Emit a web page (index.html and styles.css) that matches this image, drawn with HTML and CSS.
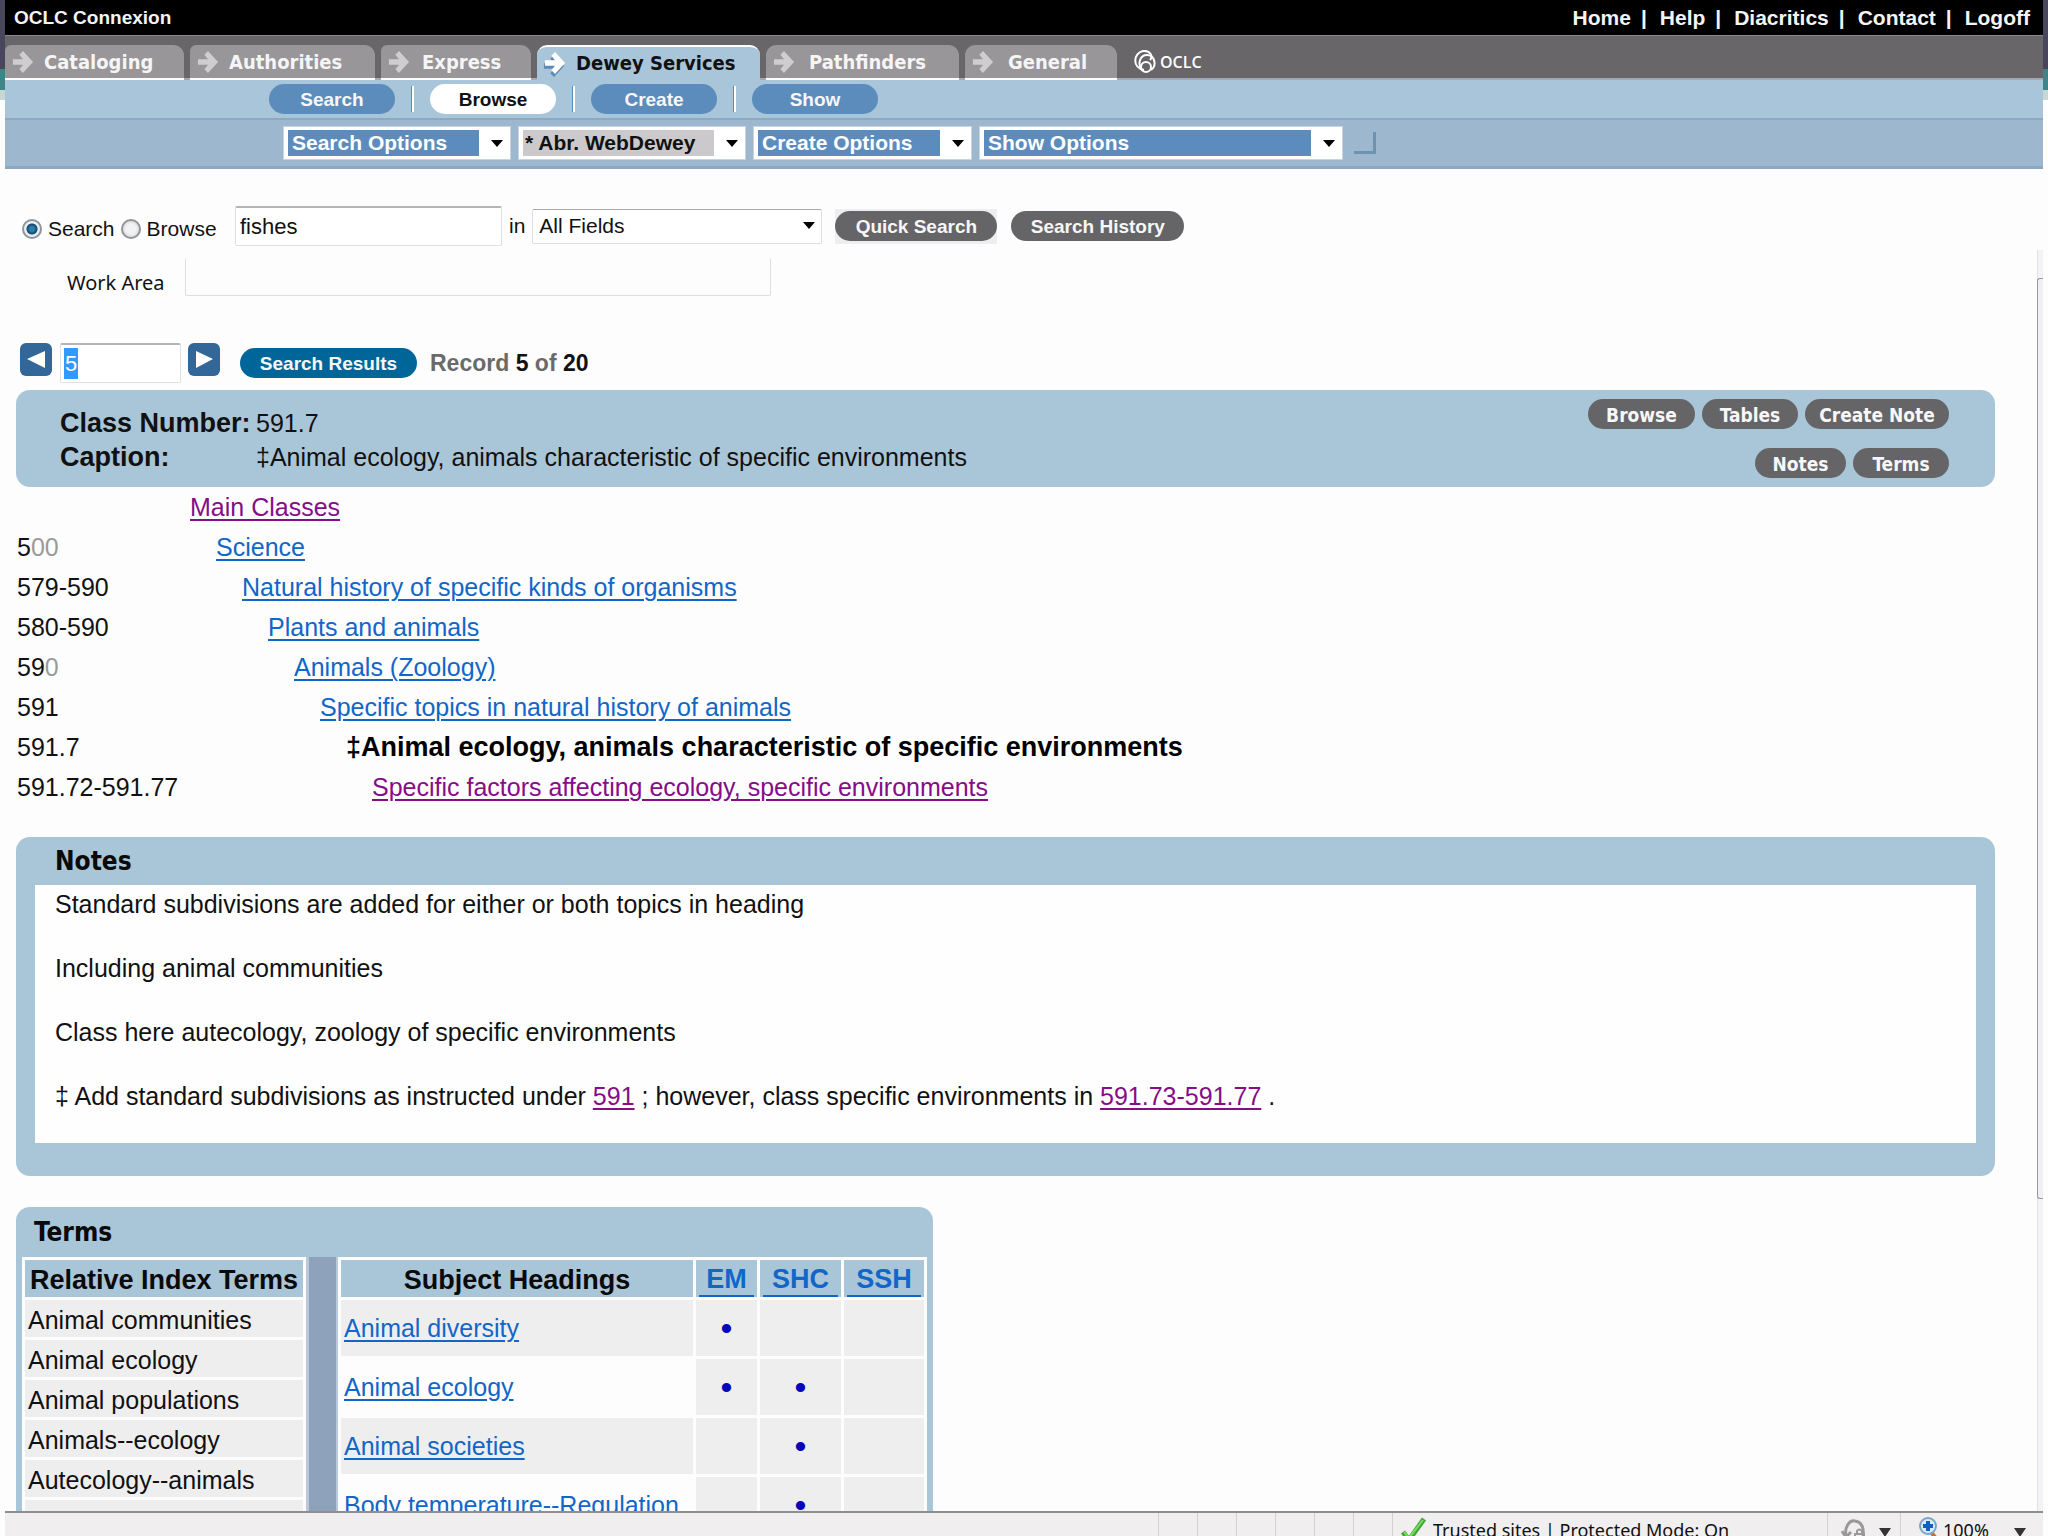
FILE: index.html
```html
<!DOCTYPE html>
<html lang="en">
<head>
<meta charset="utf-8">
<title>OCLC Connexion</title>
<link rel="stylesheet" href="styles.css">
</head>
<body>
<svg class="defs" aria-hidden="true">
  <symbol id="arrow" viewBox="0 0 22 24"><path d="M0 9h11L7 4l4-4 11 12-11 12-4-4 4-5H0z"/></symbol>
</svg>
<header>
  <div class="topbar">
    <span class="product">OCLC Connexion</span>
    <nav class="toplinks" aria-label="Utility">
      <a href="#">Home</a><i>|</i><a href="#">Help</a><i>|</i><a href="#">Diacritics</a><i>|</i><a href="#">Contact</a><i>|</i><a href="#">Logoff</a>
    </nav>
  </div>
  <nav class="tabs" aria-label="Services">
    <a href="#" class="tab tab-cat"><svg><use href="#arrow"/></svg>Cataloging</a>
    <a href="#" class="tab tab-auth"><svg><use href="#arrow"/></svg>Authorities</a>
    <a href="#" class="tab tab-exp"><svg><use href="#arrow"/></svg>Express</a>
    <a href="#" class="tab tab-dewey active"><svg><use href="#arrow"/></svg>Dewey Services</a>
    <a href="#" class="tab tab-path"><svg><use href="#arrow"/></svg>Pathfinders</a>
    <a href="#" class="tab tab-gen"><svg><use href="#arrow"/></svg>General</a>
    <span class="brand">
      <svg viewBox="0 0 22 24" fill="none" stroke="#fff"><path d="M10 20C-2 18-1 3 9 1c8-1 10 6 7 9" stroke-width="2"/><path d="M8 20C3 14 6 5 13 5c8 0 10 11 4 15" stroke-width="2"/><circle cx="12" cy="17" r="5" stroke-width="2"/></svg>OCLC
    </span>
  </nav>
  <nav class="subnav" aria-label="Dewey Services">
    <button type="button" class="mode">Search</button><span class="sep"></span>
    <button type="button" class="mode current">Browse</button><span class="sep"></span>
    <button type="button" class="mode">Create</button><span class="sep"></span>
    <button type="button" class="mode">Show</button>
  </nav>
  <div class="options">
    <div class="drop drop-s"><select aria-label="Search options"><option>Search Options</option></select></div>
    <div class="drop drop-s drop-gray"><select aria-label="Database"><option>* Abr. WebDewey</option></select></div>
    <div class="drop drop-c"><select aria-label="Create options"><option>Create Options</option></select></div>
    <div class="drop drop-l"><select aria-label="Show options"><option>Show Options</option></select></div>
    <span class="corner"></span>
  </div>
</header>

<div class="frame">
<main>
  <form class="search">
    <div class="radios">
      <input type="radio" name="m" id="m-search" checked><label for="m-search">Search</label>
      <input type="radio" name="m" id="m-browse"><label for="m-browse">Browse</label>
    </div>
    <input class="field term" type="text" value="fishes" aria-label="Search term">
    <label for="index" class="in">in</label>
    <div class="index"><select id="index"><option>All Fields</option></select></div>
    <span class="halo"><button type="button" class="pill quick">Quick Search</button></span>
    <button type="button" class="pill history">Search History</button>
  </form>
  <div class="work">
    <label for="work">Work Area</label><input id="work" type="text">
  </div>
  <div class="record">
    <button type="button" class="step" aria-label="Previous record"><svg viewBox="0 0 32 33"><path d="M25 8v17L7 16z" fill="#fff"/></svg></button>
    <input class="field number" type="text" value="5" aria-label="Record number">
    <button type="button" class="step" aria-label="Next record"><svg viewBox="0 0 32 33"><path d="M8 8v17l17-9z" fill="#fff"/></svg></button>
    <button type="button" class="pill results">Search Results</button>
    <span class="position">Record <b>5</b> of <b>20</b></span>
  </div>

  <section class="panel class-panel">
    <dl>
      <dt>Class Number:</dt><dd>591.7</dd>
      <dt>Caption:</dt><dd>‡Animal ecology, animals characteristic of specific environments</dd>
    </dl>
    <div class="actions">
      <div><button type="button" class="pill act act-b">Browse</button><button type="button" class="pill act act-t">Tables</button><button type="button" class="pill act act-c">Create Note</button></div>
      <div><button type="button" class="pill act act-n">Notes</button><button type="button" class="pill act act-t">Terms</button></div>
    </div>
  </section>

  <ul class="tree">
    <li><span></span><a class="seen" href="#" style="--depth:0">Main Classes</a></li>
    <li><span>5<s>00</s></span><a href="#" style="--depth:1">Science</a></li>
    <li><span>579-590</span><a href="#" style="--depth:2">Natural history of specific kinds of organisms</a></li>
    <li><span>580-590</span><a href="#" style="--depth:3">Plants and animals</a></li>
    <li><span>59<s>0</s></span><a href="#" style="--depth:4">Animals (Zoology)</a></li>
    <li><span>591</span><a href="#" style="--depth:5">Specific topics in natural history of animals</a></li>
    <li><span>591.7</span><strong style="--depth:6">‡Animal ecology, animals characteristic of specific environments</strong></li>
    <li><span>591.72-591.77</span><a class="seen" href="#" style="--depth:7">Specific factors affecting ecology, specific environments</a></li>
  </ul>

  <section class="panel notes">
    <h2>Notes</h2>
    <div class="notes-body">
      <p>Standard subdivisions are added for either or both topics in heading</p>
      <p>Including animal communities</p>
      <p>Class here autecology, zoology of specific environments</p>
      <p>‡ Add standard subdivisions as instructed under <a class="seen" href="#">591</a> ; however, class specific environments in <a class="seen" href="#">591.73-591.77</a> .</p>
    </div>
  </section>

  <section class="panel terms">
    <h2>Terms</h2>
    <div class="tables">
      <table class="relative">
        <thead><tr><th>Relative Index Terms</th></tr></thead>
        <tbody>
          <tr><td>Animal communities</td></tr>
          <tr><td>Animal ecology</td></tr>
          <tr><td>Animal populations</td></tr>
          <tr><td>Animals--ecology</td></tr>
          <tr><td>Autecology--animals</td></tr>
          <tr><td></td></tr>
        </tbody>
      </table>
      <div class="divider"></div>
      <table class="subjects">
        <thead><tr><th>Subject Headings</th><th class="em"><a href="#">EM</a></th><th class="shc"><a href="#">SHC</a></th><th class="ssh"><a href="#">SSH</a></th></tr></thead>
        <tbody>
          <tr><td><a href="#">Animal diversity</a></td><td>•</td><td></td><td></td></tr>
          <tr><td><a href="#">Animal ecology</a></td><td>•</td><td>•</td><td></td></tr>
          <tr><td><a href="#">Animal societies</a></td><td></td><td>•</td><td></td></tr>
          <tr><td><a href="#">Body temperature--Regulation</a></td><td></td><td>•</td><td></td></tr>
        </tbody>
      </table>
    </div>
  </section>
</main>
<div class="scroll"><div class="thumb"></div></div>
</div>

<footer>
  <span class="slot"></span><span class="slot"></span><span class="slot"></span><span class="slot"></span><span class="slot"></span><span class="slot"></span>
  <div class="zone">
    <svg class="check" viewBox="0 0 26 26"><path d="M2 15l6 8L23 2" fill="none" stroke="#3fa637" stroke-width="5"/><path d="M3 15l5 6L22 3" fill="none" stroke="#7bdc62" stroke-width="2"/></svg>
    <span>Trusted sites | Protected Mode: On</span>
  </div>
  <div class="lock">
    <svg viewBox="0 0 26 26" fill="none" stroke="#999" stroke-width="3"><path d="M5 20C3 9 9 3 14 4c8 1 9 9 8 16"/><path d="M1 14l4 6 5-5"/><rect x="14" y="17" width="9" height="8" stroke-width="2"/><path d="M16 17v-3q2-3 5 0v3" stroke-width="2"/></svg>
    <i class="caret"></i>
  </div>
  <div class="zoom">
    <svg viewBox="0 0 22 26"><path d="M12 15l7 9" stroke="#b8763a" stroke-width="4"/><circle cx="9" cy="9" r="8" fill="#d7ebfb" stroke="#7fa3c4" stroke-width="2"/><path d="M9 4v10M4 9h10" stroke="#0b62c4" stroke-width="4"/></svg>
    <span>100%</span>
    <i class="caret"></i>
  </div>
</footer>
</body>
</html>
```
FILE: styles.css
```css
* { box-sizing: border-box; }

body {
  margin: 0;
  padding: 0 5px;
  height: 100vh;
  overflow: hidden;
  display: flex;
  flex-direction: column;
  background: linear-gradient(#47465a 0 69px, #3f8487 69px 90px, #c9d6d6 90px 100px, #fdfdfd 100px);
  font: 25px/32px "Liberation Sans", Arial, sans-serif;
  color: #111;
}

.defs { position: absolute; width: 0; height: 0; }
button, input, select { font: inherit; margin: 0; }
button { border: 0; cursor: pointer; }
a { color: #1166c8; text-decoration-thickness: 2px; text-underline-offset: 3px; }
a.seen { color: #860c88; }
i { font-style: normal; }

/* Header */
header { flex: none; }

.topbar {
  height: 35px;
  padding: 0 13px 0 9px;
  display: flex;
  justify-content: space-between;
  align-items: center;
  background: #000;
  color: #f4f4f4;
  font-weight: bold;
}
.product { font-size: 19px; }
.toplinks { display: flex; font-size: 21px; }
.toplinks a { color: inherit; text-decoration: none; }
.toplinks i { padding: 0 13px 0 10px; }

.tabs {
  height: 45px;
  display: flex;
  align-items: flex-end;
  gap: 6px;
  background: #686668;
  border-top: 1px solid #8b8b8b;
  border-bottom: 2px solid #a3a9b4;
  font: bold 20px/24px "DejaVu Sans Condensed", "DejaVu Sans", sans-serif;
}
.tab {
  height: 33px;
  display: flex;
  align-items: center;
  gap: 10px;
  padding-left: 7px;
  background: #989698;
  color: #f5f5f5;
  border-radius: 10px 10px 0 0;
  text-decoration: none;
  box-shadow: 0 2px #fff;
}
.tab svg { width: 22px; height: 22px; fill: #cfcdcf; flex: none; }
.tab-cat { width: 179px; }
.tab-auth { width: 185px; }
.tab-exp { width: 150px; }
.tab-dewey { width: 223px; }
.tab-path { width: 193px; gap: 14px; }
.tab-gen { width: 152px; gap: 14px; }
.tab-cat, .tab-auth, .tab-exp { border-top-left-radius: 6px; }
.tab-exp { gap: 12px; }
.tab.active { background: #a9c5d9; color: #111; border-top: 2px solid #fff; box-shadow: 0 2px #a9c5d9; }
.tab.active svg { fill: #fff; filter: drop-shadow(-1px 3px 0 #5b88b5); }
.brand {
  height: 32px;
  margin-left: 11px;
  display: flex;
  align-items: center;
  gap: 4px;
  color: #fff;
  font: 600 16px/24px "Open Sans", sans-serif;
}
.brand svg { width: 22px; height: 24px; }

.subnav {
  height: 40px;
  padding-left: 264px;
  display: flex;
  align-items: center;
  background: #a9c5d9;
  border-bottom: 2px solid #8ca9c1;
}
.mode {
  width: 126px;
  height: 30px;
  padding: 0;
  border-radius: 15px;
  background: #5b8cbb;
  color: #f7f7f7;
  font-size: 19px;
  font-weight: bold;
}
.mode.current { background: #fff; color: #111; }
.sep { width: 3px; height: 26px; margin: 0 16px; background: #fff; border-left: 1px solid #5b8cbb; }

.options {
  height: 49px;
  padding: 0 0 0 278px;
  display: flex;
  align-items: center;
  gap: 7px;
  background: #9db8ce;
  border-bottom: 3px solid #8aa8c2;
}
.drop {
  position: relative;
  height: 34px;
  padding: 3px 31px 3px 4px;
  background: #fff;
  border: 1px solid #c9d3de;
}
.drop select {
  display: block;
  width: 100%;
  height: 26px;
  padding: 0 4px;
  border: 0;
  border-radius: 0;
  appearance: none;
  background: #5b8cbd;
  color: #fff;
  font-size: 21px;
  line-height: 26px;
  font-weight: bold;
}
.drop::after, .index::after {
  content: "";
  position: absolute;
  right: 7px;
  top: 13px;
  border: 6px solid transparent;
  border-top: 7px solid #000;
  border-bottom: 0;
}
.drop-s { width: 228px; }
.drop-c { width: 219px; }
.drop-l { width: 364px; }
.drop-gray select { background: #cbc9cb; color: #111; padding: 0 2px; }
.corner { width: 22px; height: 22px; margin-left: 4px; border: solid #6f93ae; border-width: 0 3px 3px 0; }

/* Record frame */
.frame { flex: 1; min-height: 0; display: flex; overflow: hidden; background: #fdfdfd; }
main { flex: 1; min-width: 0; padding: 37px 42px 0 11px; }

.search { display: flex; align-items: center; height: 40px; font-size: 21px; }
.radios { display: flex; align-items: center; width: 219px; padding: 6px 0 0 6px; }
.radios label { padding: 0 6px; }
.radios input {
  appearance: none;
  width: 20px;
  height: 20px;
  border: 2px solid #8e9499;
  border-radius: 50%;
  background: radial-gradient(circle, #f2f2f2 40%, #cfcfcf);
}
.radios input:checked { background: radial-gradient(circle, #2e7fb0 0 2px, #10456c 5px, #e8eef2 6px); }
.field {
  height: 40px;
  padding: 0 4px;
  border: 1px solid #dfdfe4;
  border-top: 2px solid #b5b5b8;
  border-radius: 2px;
  background: #fff;
  color: #111;
  font-size: 22px;
}
.term { width: 267px; }
.in { padding: 0 7px; }
.index { position: relative; width: 290px; }
.index select {
  display: block;
  width: 100%;
  height: 35px;
  padding: 0 6px;
  border: 1px solid #dcdce2;
  border-top-color: #a9a9ad;
  border-radius: 2px;
  appearance: none;
  background: #fff;
  color: #111;
}
.pill {
  height: 30px;
  padding: 0;
  border-radius: 15px;
  background: #656567;
  color: #f7f7f7;
  font-size: 19px;
  font-weight: bold;
}
.halo { height: 35px; margin: 0 14px 0 13px; padding-top: 2px; background: #eeedef; display: flex; }
.quick { width: 162px; }
.history { width: 173px; }

.work { display: flex; margin-top: 12px; padding-left: 51px; font: 20px/50px "Noto Sans", sans-serif; height: 38px; }
.work label { width: 118px; }
.work input { width: 586px; height: 38px; border: 1px solid #dddde2; border-top: 0; border-radius: 2px; background: #fdfdfd; }

.record { display: flex; align-items: center; height: 40px; margin: 47px 0 7px 4px; }
.step { width: 32px; height: 33px; margin-bottom: 7px; padding: 0; border-radius: 6px; background: #336699; }
.step svg { display: block; }
.number {
  width: 121px;
  margin: 0 7px 0 8px;
  color: #fff;
  background: linear-gradient(#3399ff, #3399ff) 3px 3px / 14px 31px no-repeat #fff;
}
.results { width: 177px; margin-left: 20px; background: #006699; }
.position { margin-left: 13px; font-size: 23px; font-weight: bold; color: #6a6a6a; }
.position b { color: #111; }

.panel { background: #a9c5d8; border-radius: 14px; }
.class-panel { height: 97px; padding: 9px 46px 9px 44px; display: flex; justify-content: space-between; }
dl { margin: 7px 0 0; display: grid; grid-template-columns: 196px auto; line-height: 34px; align-content: start; }
dt { font-weight: bold; font-size: 27px; white-space: nowrap; }
dd { margin: 0; }
.actions { display: flex; flex-direction: column; justify-content: space-between; }
.actions div { display: flex; justify-content: flex-end; gap: 7px; }
.act { font-family: "DejaVu Sans Condensed", "DejaVu Sans", sans-serif; }
.act-b { width: 107px; }
.act-t { width: 96px; }
.act-c { width: 144px; }
.act-n { width: 91px; }

.tree { list-style: none; margin: 0; padding: 0 0 0 1px; }
.tree li { display: grid; grid-template-columns: 173px auto; justify-content: start; line-height: 40px; }
.tree s { text-decoration: none; color: #9a9a9a; }
.tree a, .tree strong { margin-left: calc(var(--depth) * 26px); }
.tree strong { font-size: 27px; color: #000; }

h2 { margin: 0; font: bold 26px/48px "DejaVu Sans Condensed", "DejaVu Sans", sans-serif; color: #0a0a0a; }
.notes { margin-top: 30px; padding: 0 19px 33px; }
.notes h2 { padding-left: 20px; }
.notes-body { padding: 3px 20px 31px; background: #fefefe; display: grid; gap: 32px; }
.notes p { margin: 0; }

.terms { width: 917px; margin-top: 31px; padding: 0 6px; }
.terms h2 { padding-left: 12px; line-height: 50px; }
.tables { display: flex; align-items: flex-start; }
table { border-collapse: separate; border-spacing: 3px; background: #fdfdfd; table-layout: fixed; }
th, td { padding: 2px 3px 0; white-space: nowrap; text-align: left; background: #efeeef; height: 37px; line-height: 32px; }
th { background: #a9c5d8; font-size: 27px; color: #0a0a0a; }
.relative { width: 284px; }
.relative th { text-align: center; padding: 2px 0 0; }
.divider { align-self: stretch; width: 32px; background: #8fa2bb; border: solid #b9c9dc; border-width: 0 2px 0 3px; }
.subjects { width: 589px; }
.subjects th { text-align: center; }
.subjects th a { display: block; text-decoration: none; border-bottom: 2px solid #1166c8; }
.em { width: 61px; }
.shc { width: 81px; }
.ssh { width: 80px; }
.subjects td { height: 56px; padding-top: 0; }
.subjects td + td { text-align: center; color: #0606ba; font-size: 34px; }
.subjects tr:nth-child(even) td:first-child { background: #fdfdfd; }

.scroll { width: 6px; margin-top: 81px; background: #f3f2f5; border-left: 1px solid #e2e1e6; }
.thumb { height: 73%; margin: 28px 0 0 -1px; border: 1px solid #98979d; border-right: 0; border-radius: 3px 0 0 3px; background: #f1eff3; }

/* Status bar */
footer {
  flex: none;
  height: 25px;
  display: flex;
  justify-content: flex-end;
  overflow: hidden;
  background: #f0eeee;
  border-top: 2px solid #8e8e93;
  font: 18px/34px "Noto Sans", sans-serif;
  white-space: nowrap;
}
footer > * { border-left: 1px solid #d2d0d2; flex: none; display: flex; }
footer svg { height: 26px; margin-top: 4px; flex: none; }
.slot { width: 39px; }
.zone { width: 435px; padding-left: 8px; gap: 6px; }
.check { width: 26px; }
.lock { width: 73px; padding-left: 13px; gap: 12px; }
.lock svg { width: 26px; }
.zoom { width: 143px; padding: 0 17px 0 18px; gap: 2px; }
.zoom svg { width: 22px; }
.zoom .caret { margin-left: auto; }
.caret { border: 6px solid transparent; border-top: 9px solid #333; border-bottom: 0; margin-top: 15px; height: 9px; }
```
